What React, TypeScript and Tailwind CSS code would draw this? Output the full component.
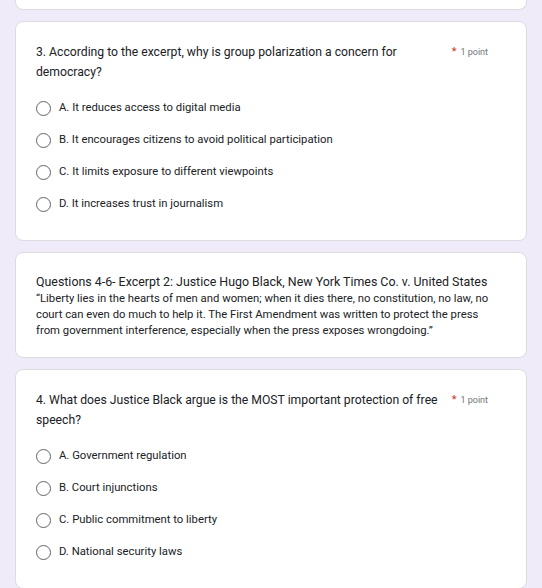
import React from 'react'

type Question = {
    title: string
    options: string[]
}

const questions: Question[] = [
    {
        title: '3. According to the excerpt, why is group polarization a concern for democracy?',
        options: [
            'A. It reduces access to digital media',
            'B. It encourages citizens to avoid political participation',
            'C. It limits exposure to different viewpoints',
            'D. It increases trust in journalism',
        ],
    },
    {
        title: '4. What does Justice Black argue is the MOST important protection of free speech?',
        options: [
            'A. Government regulation',
            'B. Court injunctions',
            'C. Public commitment to liberty',
            'D. National security laws',
        ],
    },
]

const QuestionCard = ({ q }: { q: Question }) => {
    return (
        <div className="bg-white rounded-lg border border-[#dadce0] pt-5 pb-5 px-5">
            <div className="flex items-start justify-between gap-3">
                <h2 className="text-[12.2px] leading-[20px] text-[#202124]">{q.title}</h2>
                <div className="flex items-center gap-[4px] shrink-0 mr-[18px]">
                    <span className="text-[#d93025] text-[11px] leading-[20px]">*</span>
                    <span className="text-[9px] leading-[20px] text-[#70757a]">1 point</span>
                </div>
            </div>
            <div className="mt-[10px] flex flex-col" role="radiogroup">
                {q.options.map((opt) => (
                    <label key={opt} className="flex items-center h-8 gap-[8px] cursor-pointer">
                        <span className="w-[15px] h-[15px] rounded-full border-[1.5px] border-[#5f6368] shrink-0" />
                        <span className="text-[11.3px] text-[#202124]">{opt}</span>
                    </label>
                ))}
            </div>
        </div>
    )
}

const App = () => {
    return (
        <div className="min-h-screen bg-[#f0ebf8] px-[15px] pb-4 font-['Roboto','Liberation_Sans',sans-serif]">
            <div className="flex flex-col gap-[11px]">
                <div className="h-[10px] bg-white border border-t-0 border-[#dadce0] rounded-b-lg" />
                <QuestionCard q={questions[0]} />
                <div className="bg-white rounded-lg border border-[#dadce0] pt-5 pb-[18px] px-5">
                    <h2 className="text-[12.4px] leading-[18px] text-[#202124]">
                        Questions 4-6- Excerpt 2: Justice Hugo Black, New York Times Co. v. United States
                    </h2>
                    <p className="max-w-[456px] text-[11.3px] leading-[16px] text-[#202124]">
                        “Liberty lies in the hearts of men and women; when it dies there, no constitution, no law, no
                        court can even do much to help it. The First Amendment was written to protect the press
                        from government interference, especially when the press exposes wrongdoing.”
                    </p>
                </div>
                <QuestionCard q={questions[1]} />
            </div>
        </div>
    )
}

export default App
